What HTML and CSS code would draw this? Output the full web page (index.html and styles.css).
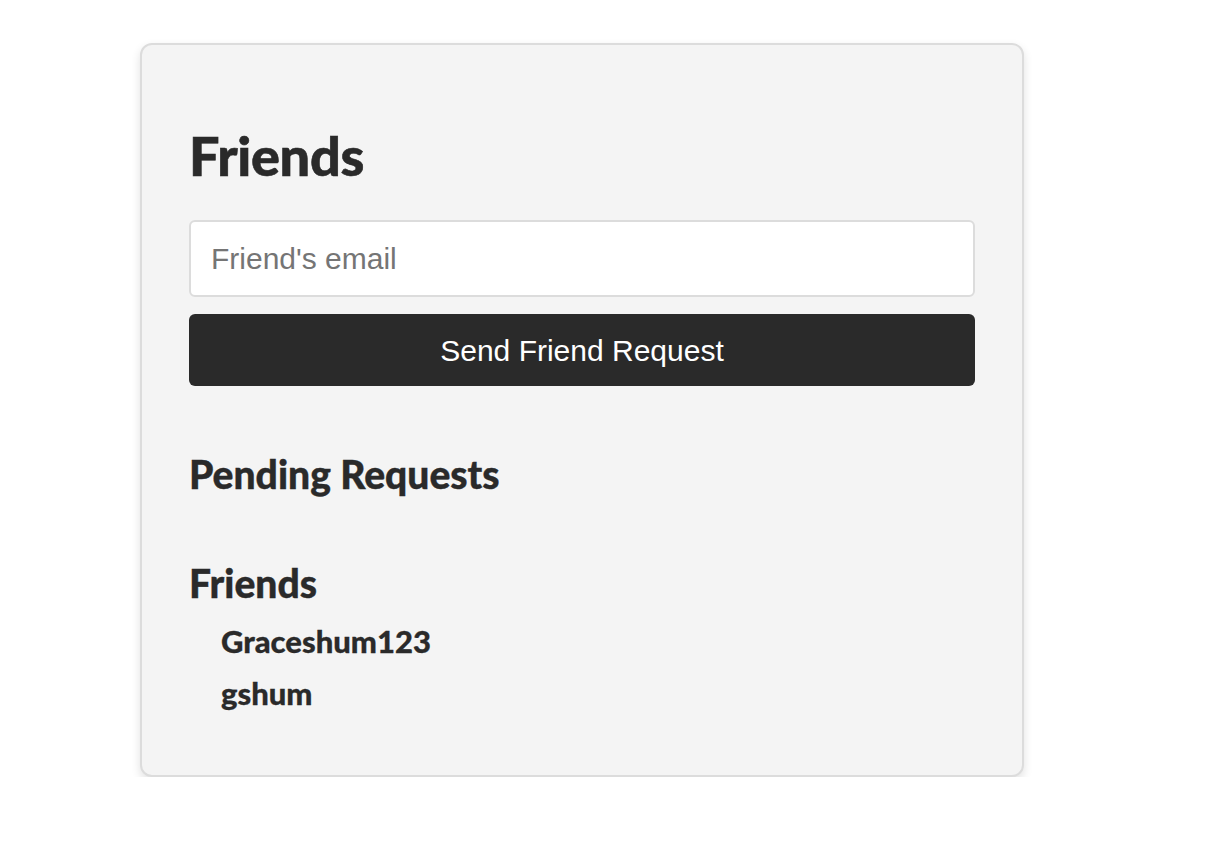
FILE: index.html
```html
<!DOCTYPE html>
<html>
<head>
<meta charset="utf-8">
<link rel="stylesheet" href="styles.css">
</head>
<body>
<div class="card">
  <h1 class="title">Friends</h1>
  <input class="email" type="text" placeholder="Friend's email">
  <button class="send">Send Friend Request</button>
  <h2 class="section pending">Pending Requests</h2>
  <h2 class="section friends">Friends</h2>
  <ul class="list">
    <li>Graceshum123</li>
    <li>gshum</li>
  </ul>
</div>
</body>
</html>
```

FILE: styles.css
```css
* { box-sizing: border-box; }
html, body { margin: 0; padding: 0; background: #fff; }
body { font-family: Lato, "Liberation Sans", sans-serif; color: #2a2a2a; }
.card {
  margin: 43px 0 0 140px;
  width: 884px;
  border: 2px solid #dcdcdc;
  border-radius: 12px;
  background: #f4f4f4;
  box-shadow: 0 4px 10px rgba(0,0,0,0.12);
  padding: 47px 47px 56px 47px;
  display: flex;
  flex-direction: column;
}
.title {
  margin: 30px 0 0 0;
  font-size: 54px;
  line-height: 68px;
  font-weight: 900;
  letter-spacing: -0.3px;
  -webkit-text-stroke: 0.6px #2a2a2a;
}
.email {
  margin-top: 30px;
  height: 77px;
  border: 2px solid #dcdcdc;
  border-radius: 6px;
  background: #fff;
  padding: 0 20px;
  font-family: "Liberation Sans", Arial, sans-serif;
  font-size: 30px;
  color: #2a2a2a;
  outline: none;
}
.email::placeholder { color: #757575; }
.send {
  margin-top: 17px;
  height: 72px;
  border: none;
  border-radius: 6px;
  background: #2a2a2a;
  color: #fff;
  font-family: "Liberation Sans", Arial, sans-serif;
  font-size: 30px;
  padding-top: 2px;
}
.section {
  margin: 0;
  font-size: 39px;
  line-height: 48px;
  font-weight: 900;
  -webkit-text-stroke: 0.4px #2a2a2a;
}
.pending { margin-top: 64px; }
.friends { margin-top: 61px; }
.list {
  list-style: none;
  margin: 8px 0 0 0;
  padding: 0 0 0 32px;
}
.list li {
  font-size: 31px;
  line-height: 52px;
  font-weight: 900;
  -webkit-text-stroke: 0.3px #2a2a2a;
}
```
